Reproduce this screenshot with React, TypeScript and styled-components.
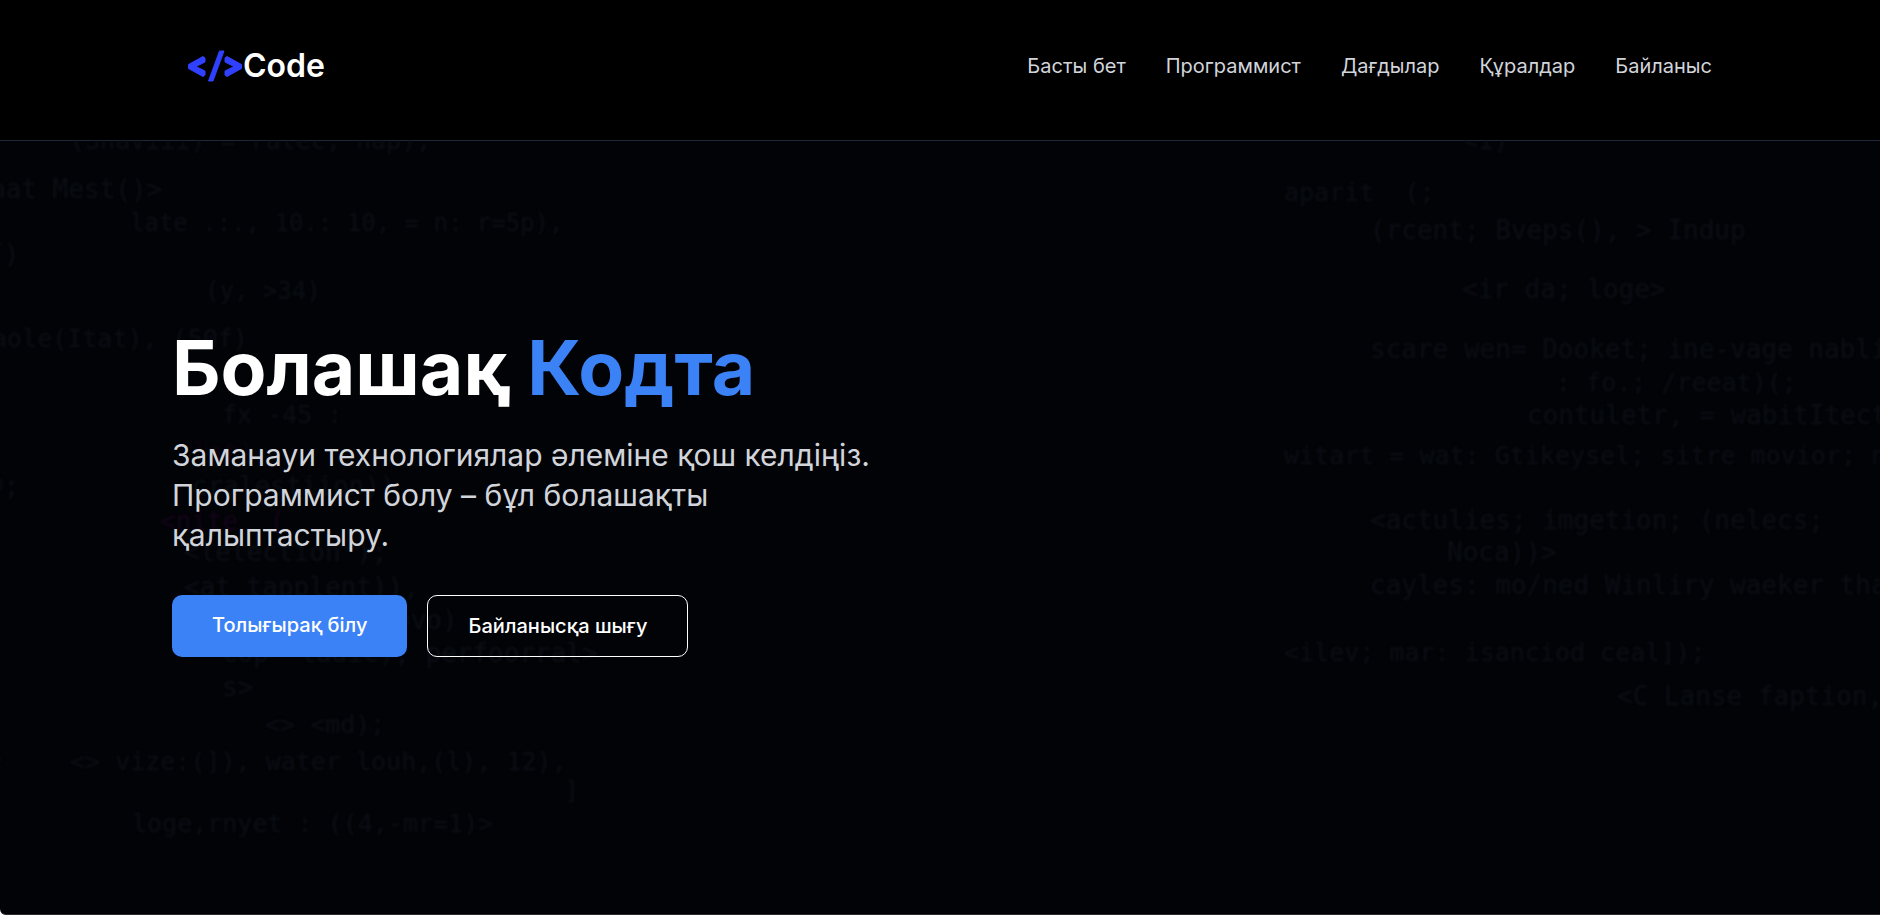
import React from "react";
import styled, { createGlobalStyle } from "styled-components";

const GlobalStyle = createGlobalStyle`
  *, *::before, *::after { box-sizing: border-box; }
  body {
    margin: 0;
    background: #ffffff;
    font-family: Inter, "Liberation Sans", sans-serif;
    color: #ffffff;
  }
`;

const Page = styled.div`
  display: flex;
  flex-direction: column;
  min-height: 100vh;
  background: #020306;
  border-bottom: 1px solid #2a2a2e;
  border-bottom-left-radius: 6px;
  overflow: hidden;
`;

const Container = styled.div`
  width: 100%;
  max-width: 1600px;
  margin: 0 auto;
  padding: 0 28px 0 32px;
`;

const Header = styled.header`
  background: #000000;
  border-bottom: 1px solid #1f2937;
  padding: 16px 0 24px;
`;

const HeaderRow = styled(Container)`
  display: flex;
  align-items: center;
  justify-content: space-between;
  min-height: 100px;
`;

const LogoLink = styled.a`
  display: flex;
  align-items: center;
  padding-left: 16px;
  color: #ffffff;
  text-decoration: none;
`;

const LogoMark = styled.svg`
  display: block;
  width: 55px;
  height: 32px;
`;

const LogoText = styled.span`
  font-size: 32px;
  font-weight: 600;
  line-height: 34px;
`;

const Nav = styled.nav`
  display: flex;
  gap: 40px;
`;

const NavLink = styled.a`
  font-size: 20px;
  line-height: 30px;
  color: #d1d5db;
  text-decoration: none;

  &:hover { color: #3b82f6; }
`;

const Hero = styled.main`
  position: relative;
  flex: 1;
  display: flex;
  align-items: center;
  padding-bottom: 68px;
`;

const Backdrop = styled.svg`
  position: absolute;
  inset: 0;
  width: 100%;
  height: 100%;
  font-family: "DejaVu Sans Mono", monospace;
  filter: blur(1px);

  text { white-space: pre; }
`;

const HeroContainer = styled(Container)`
  position: relative;
`;

const Title = styled.h1`
  margin: 0 0 30px;
  font-size: 75px;
  font-weight: 700;
  line-height: 75px;
`;

const Accent = styled.span`
  color: #3b82f6;
`;

const Lead = styled.p`
  margin: 0 0 40px;
  max-width: 720px;
  font-size: 30px;
  line-height: 40px;
  color: #d1d5db;
`;

const Actions = styled.div`
  display: flex;
  gap: 20px;
`;

const ActionLink = styled.a<{ $outlined?: boolean }>`
  padding: 15px 40px;
  border: ${(p) => (p.$outlined ? "1px solid #ffffff" : "none")};
  border-radius: 10px;
  background: ${(p) => (p.$outlined ? "transparent" : "#3b82f6")};
  color: #ffffff;
  font-size: 20px;
  font-weight: 500;
  line-height: 30px;
  text-decoration: none;
`;

const links = [
  { href: "#home", label: "Басты бет" },
  { href: "#programmer", label: "Программист" },
  { href: "#skills", label: "Дағдылар" },
  { href: "#tools", label: "Құралдар" },
  { href: "#contact", label: "Байланыс" },
];

type CodeLine = { x: number; y: number; text: string; size?: number; fill?: string };

const leftCode: CodeLine[] = [
  { x: 70, y: 8, text: "(Shaviii) = ratec, nap);", size: 25 },
  { x: -10, y: 57, text: "hat Mest()>" },
  { x: 130, y: 90, text: "late .:., 10.: 10, = n: r=5p),", size: 24 },
  { x: -12, y: 122, text: "/)" },
  { x: 205, y: 158, text: "(y, >34)", size: 24 },
  { x: -8, y: 206, text: "aole(Itat), (50f)", size: 25 },
  { x: 222, y: 282, text: "fx -45 :", size: 25 },
  { x: 192, y: 320, text: "lat)", fill: "#0b0410" },
  { x: -12, y: 354, text: "9;" },
  { x: 192, y: 354, text: "cralestiion))" },
  { x: 160, y: 389, text: "<nite  (", fill: "#14041c" },
  { x: 184, y: 420, text: "<lelection );" },
  { x: 184, y: 455, text: "<at tapplent)),", size: 26 },
  { x: 395, y: 488, text: "=vo)" },
  { x: 222, y: 521, text: "cop  ladic), perfoorral>" },
  { x: 222, y: 555, text: "s>" },
  { x: 265, y: 592, text: "<> <md);", size: 25 },
  { x: -8, y: 629, text: ":", size: 25 },
  { x: 70, y: 629, text: "<> vize:(]), water louh,(l), 12),", size: 25 },
  { x: 564, y: 658, text: "]", size: 25 },
  { x: 132, y: 691, text: "loge,rnyet : ((4,-mr=1)>", size: 25 },
];

const rightCode: CodeLine[] = [
  { x: 1462, y: 8, text: "<1)" },
  { x: 1284, y: 60, text: "aparit  (;", size: 25 },
  { x: 1370, y: 98, text: "(rcent; Bveps(), > Indup" },
  { x: 1462, y: 157, text: "<ir da; loge>" },
  { x: 1370, y: 217, text: "scare wen= Dooket; ine-vage nabli" },
  { x: 1556, y: 250, text: ": fo.; /reeat)(;", size: 25 },
  { x: 1527, y: 283, text: "contuletr, = wabitItect" },
  { x: 1284, y: 323, text: "witart = wat: Gtikeysel; sitre movior; n", size: 25 },
  { x: 1370, y: 388, text: "<actulies; imgetion; (nelecs;" },
  { x: 1447, y: 420, text: "Noca))>" },
  { x: 1370, y: 453, text: "cayles: mo/ned Winliry waeker tha" },
  { x: 1284, y: 520, text: "<ilev; mar: isanciod ceal]);", size: 25 },
  { x: 1617, y: 564, text: "<C Lanse faption," },
];

export default function App() {
  return (
    <>
      <GlobalStyle />
      <Page>
        <Header>
          <HeaderRow>
            <LogoLink href="#home">
              <LogoMark viewBox="0 0 55 32" aria-hidden="true">
                <g fill="#3040ff" stroke="#3040ff" strokeWidth="1" strokeLinejoin="round">
                  <path d="M.5 14.5 15 6.5l2 1.5v4L8 16.5l9 4.5v4l-2 1.5L.5 18.5z" />
                  <path d="M53.5 14.5 39 6.5 37 8v4l9 4.5-9 4.5v4l2 1.5 14.5-8z" />
                  <path d="M31.5 1h4.5L25 31h-4.5z" />
                </g>
              </LogoMark>
              <LogoText>Code</LogoText>
            </LogoLink>
            <Nav>
              {links.map((l) => (
                <NavLink key={l.href} href={l.href}>{l.label}</NavLink>
              ))}
            </Nav>
          </HeaderRow>
        </Header>
        <Hero id="home">
          <Backdrop aria-hidden="true">
            {[...leftCode, ...rightCode].map((c) => (
              <text key={`${c.x}-${c.y}`} x={c.x} y={c.y} fontSize={c.size ?? 26} fill={c.fill ?? "#0a0f16"}>
                {c.text}
              </text>
            ))}
          </Backdrop>
          <HeroContainer>
            <Title>
              Болашақ <Accent>Кодта</Accent>
            </Title>
            <Lead>
              Заманауи технологиялар әлеміне қош келдіңіз. Программист болу – бұл болашақты қалыптастыру.
            </Lead>
            <Actions>
              <ActionLink href="#programmer">Толығырақ білу</ActionLink>
              <ActionLink href="#contact" $outlined>Байланысқа шығу</ActionLink>
            </Actions>
          </HeroContainer>
        </Hero>
      </Page>
    </>
  );
}
